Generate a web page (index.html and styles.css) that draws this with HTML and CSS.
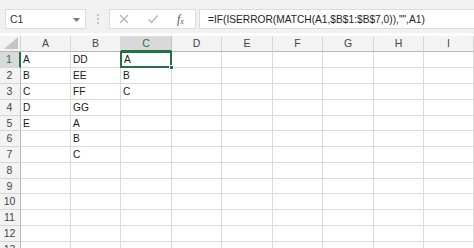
FILE: index.html
```html
<!DOCTYPE html>
<html>
<head>
<meta charset="utf-8">
<link rel="stylesheet" href="styles.css">
</head>
<body>
<div class="app">
  <div class="toolbar">
    <div class="namebox">
      <span class="name">C1</span>
      <svg class="caret" width="7" height="4" viewBox="0 0 7 4"><path d="M0 0H7L3.5 4Z" fill="#7a7a7a"/></svg>
    </div>
    <div class="grip"><i></i><i></i><i></i></div>
    <div class="fbuttons">
      <svg class="ico" width="12" height="12" viewBox="0 0 12 12"><path d="M2 2L10 10M10 2L2 10" stroke="#b4b4b4" stroke-width="1.2" fill="none"/></svg>
      <svg class="ico" width="12" height="12" viewBox="0 0 12 12"><path d="M1.5 6.5L4.5 9.5L10.5 2.5" stroke="#b4b4b4" stroke-width="1.2" fill="none"/></svg>
      <span class="fx">f<sub>x</sub></span>
    </div>
    <div class="formula">=IF(ISERROR(MATCH(A1,$B$1:$B$7,0)),"",A1)</div>
  </div>
  <div class="gap"></div>
  <div class="sheet">
    <div class="corner"><svg width="14" height="12" viewBox="0 0 14 12"><path d="M14 0V12H0Z" fill="#c4c4c4"/></svg></div>
    <div class="ch">A</div><div class="ch">B</div><div class="ch sel">C</div><div class="ch">D</div><div class="ch">E</div><div class="ch">F</div><div class="ch">G</div><div class="ch">H</div><div class="ch">I</div>

    <div class="rh sel">1</div><div class="c">A</div><div class="c">DD</div><div class="c active">A<span class="handle"></span></div><div class="c"></div><div class="c"></div><div class="c"></div><div class="c"></div><div class="c"></div><div class="c"></div>
    <div class="rh">2</div><div class="c">B</div><div class="c">EE</div><div class="c">B</div><div class="c"></div><div class="c"></div><div class="c"></div><div class="c"></div><div class="c"></div><div class="c"></div>
    <div class="rh">3</div><div class="c">C</div><div class="c">FF</div><div class="c">C</div><div class="c"></div><div class="c"></div><div class="c"></div><div class="c"></div><div class="c"></div><div class="c"></div>
    <div class="rh">4</div><div class="c">D</div><div class="c">GG</div><div class="c"></div><div class="c"></div><div class="c"></div><div class="c"></div><div class="c"></div><div class="c"></div><div class="c"></div>
    <div class="rh">5</div><div class="c">E</div><div class="c">A</div><div class="c"></div><div class="c"></div><div class="c"></div><div class="c"></div><div class="c"></div><div class="c"></div><div class="c"></div>
    <div class="rh">6</div><div class="c"></div><div class="c">B</div><div class="c"></div><div class="c"></div><div class="c"></div><div class="c"></div><div class="c"></div><div class="c"></div><div class="c"></div>
    <div class="rh">7</div><div class="c"></div><div class="c">C</div><div class="c"></div><div class="c"></div><div class="c"></div><div class="c"></div><div class="c"></div><div class="c"></div><div class="c"></div>
    <div class="rh">8</div><div class="c"></div><div class="c"></div><div class="c"></div><div class="c"></div><div class="c"></div><div class="c"></div><div class="c"></div><div class="c"></div><div class="c"></div>
    <div class="rh">9</div><div class="c"></div><div class="c"></div><div class="c"></div><div class="c"></div><div class="c"></div><div class="c"></div><div class="c"></div><div class="c"></div><div class="c"></div>
    <div class="rh">10</div><div class="c"></div><div class="c"></div><div class="c"></div><div class="c"></div><div class="c"></div><div class="c"></div><div class="c"></div><div class="c"></div><div class="c"></div>
    <div class="rh">11</div><div class="c"></div><div class="c"></div><div class="c"></div><div class="c"></div><div class="c"></div><div class="c"></div><div class="c"></div><div class="c"></div><div class="c"></div>
    <div class="rh">12</div><div class="c"></div><div class="c"></div><div class="c"></div><div class="c"></div><div class="c"></div><div class="c"></div><div class="c"></div><div class="c"></div><div class="c"></div>
    <div class="rh">13</div><div class="c"></div><div class="c"></div><div class="c"></div><div class="c"></div><div class="c"></div><div class="c"></div><div class="c"></div><div class="c"></div><div class="c"></div>
  </div>
</div>
</body>
</html>
```
FILE: styles.css
```css
* { box-sizing: border-box; }
html, body { margin: 0; padding: 0; background: #fff; }
body { width: 474px; height: 248px; overflow: hidden; font-family: "Liberation Sans", Arial, sans-serif; color: #222; }
.app { display: flex; flex-direction: column; width: 474px; }
.toolbar {
  height: 33px; background: #f1f1f1; display: flex; align-items: flex-start;
  padding: 9px 0 0 5px;
}
.namebox {
  width: 81px; height: 20px; background: #fff; border: 1px solid #dcdcdc;
  display: flex; align-items: center; justify-content: space-between; padding: 0 5px 0 4px;
}
.name { font-size: 10.5px; color: #333; }
.caret { margin-top: 1px; }
.grip { width: 23px; height: 20px; display: flex; flex-direction: column; align-items: center; justify-content: center; gap: 2px; }
.grip i { display: block; width: 2px; height: 2px; background: #c4c4c4; }
.fbuttons {
  width: 87px; height: 20px; background: #fff; border: 1px solid #dcdcdc;
  display: flex; align-items: center; padding-left: 8px; gap: 17px;
}
.fx { font-family: "Liberation Serif", serif; font-style: italic; font-size: 12px; color: #555; margin-left: 1px; }
.fx sub { font-size: 8px; vertical-align: -1px; }
.formula {
  margin-left: 3px; flex: 1; height: 20px; background: #fff; border: 1px solid #dcdcdc; border-right: none;
  font-size: 10.2px; color: #222; padding: 4px 0 0 8px; white-space: nowrap;
}
.gap { height: 3px; background: #fff; }
.sheet {
  display: grid;
  grid-template-columns: 21px 50px 50px 51px 50px 51px 50px 51px 50px 50px;
  grid-template-rows: 16px 16px 16px 16px 16px 15px 16px 16px 16px 15px 16px 16px 16px 16px;
}
.corner { background: #f3f3f3; border-right: 1px solid #d0d0d0; border-bottom: 1px solid #b8b8b8; display: flex; align-items: flex-end; justify-content: flex-end; padding: 0 2px 2px 0; }
.ch {
  background: #f3f3f3; border-right: 1px solid #d6d6d6; border-bottom: 1px solid #b8b8b8;
  font-size: 10.5px; color: #444; text-align: center; line-height: 15px;
}
.ch.sel { background: #d9d9d9; color: #217346; border-bottom: 2px solid #217346; border-right-color: #c0c0c0; }
.rh {
  background: #f3f3f3; border-right: 1px solid #b8b8b8; border-bottom: 1px solid #d6d6d6;
  font-size: 10.5px; color: #444; text-align: center; line-height: 15px; padding-right: 1px;
}
.rh.sel { background: #d9d9d9; color: #217346; border-right: 2px solid #217346; }
.c {
  border-right: 1px solid #dadada; border-bottom: 1px solid #dadada;
  font-size: 10.2px; line-height: 15px; padding-left: 2px; color: #1a1a1a; white-space: nowrap;
}
.c.active { position: relative; border: 2px solid #217346; margin: -1px 0 0 -1px; padding-left: 2px; line-height: 13px; }
.handle { position: absolute; right: -4px; bottom: -4px; width: 5px; height: 5px; background: #217346; border: 1px solid #fff; }
```
